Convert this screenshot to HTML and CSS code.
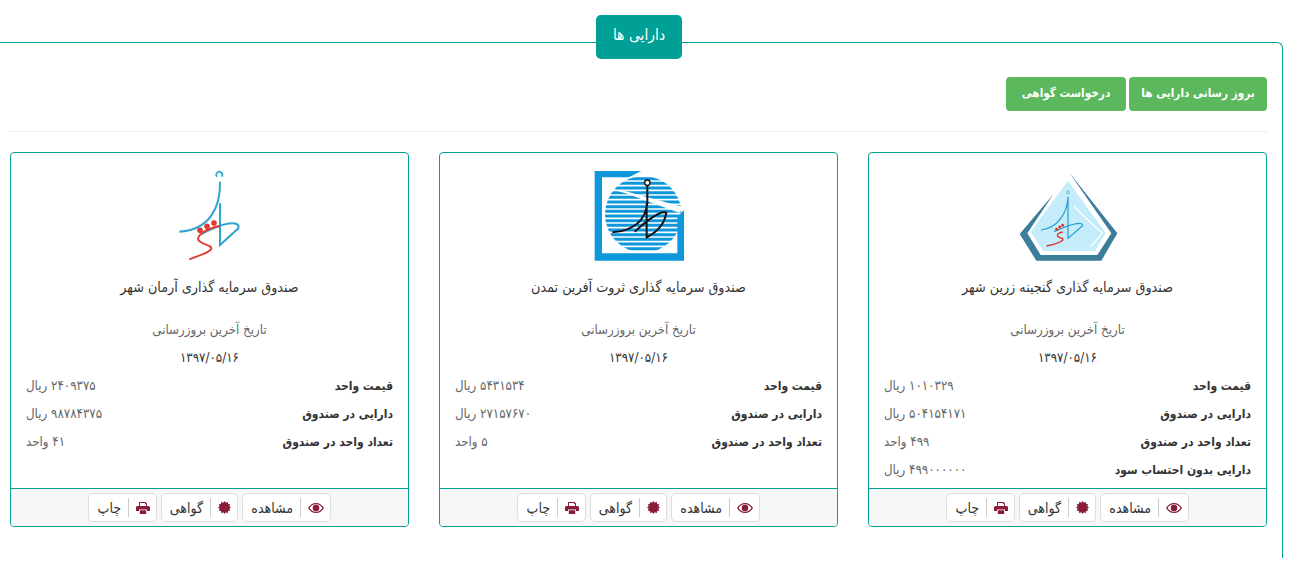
FILE: index.html
```html
<!DOCTYPE html>
<html lang="fa" dir="rtl">
<head>
    <meta charset="UTF-8">
    <title>دارایی ها</title>
    <link rel="stylesheet" href="styles.css">
</head>
<body>
    <div class="panel">
        <div class="panel-tab">دارایی ها</div>
        <div class="actions">
            <a class="btn-green btn-update">بروز رسانی دارایی ها</a>
            <a class="btn-green btn-request">درخواست گواهی</a>
        </div>
        <hr class="divider">
        <div class="cards">
            <div class="card">
                <div class="card-body">
                    <svg class="logo" viewBox="442 30 360 330">
                        <polygon points="625,67 770,250 722,332 527,332 477,252 578,133 500,250 540,315 710,315 752,250" fill="#3d7d9b"/>
                        <polygon points="622,92 735,248 703,303 548,303 510,245" fill="#c5ecfb"/>
                        <polyline points="640,170 725,250 690,290" fill="none" stroke="#fff" stroke-width="4"/>
                        <circle cx="622" cy="127" r="4" fill="none" stroke="#2fa5cf" stroke-width="2"/>
                        <path d="M622 140V265L665 228C668 212 630 222 580 245M622 140C620 190 590 235 541 240" fill="none" stroke="#1f9ccb" stroke-width="3.500"/>
                        <path d="M606 246C580 252 590 262 605 265C615 272 585 282 558 288" fill="none" stroke="#d8382e" stroke-width="4"/>
                        <circle cx="588" cy="238" r="4.500" fill="#d8382e"/>
                        <circle cx="597" cy="231" r="4.500" fill="#d8382e"/>
                        <circle cx="606" cy="226" r="4.500" fill="#d8382e"/>
                    </svg>
                    <h3 class="fund-name">صندوق سرمایه گذاری گنجینه زرین شهر</h3>
                    <div class="updated">تاریخ آخرین بروزرسانی</div>
                    <div class="updated-date">۱۳۹۷/۰۵/۱۶</div>
                    <div class="row"><span class="row-label">قیمت واحد</span><span class="row-value">۱۰۱۰۳۲۹ ریال</span></div>
                    <div class="row"><span class="row-label">دارایی در صندوق</span><span class="row-value">۵۰۴۱۵۴۱۷۱ ریال</span></div>
                    <div class="row"><span class="row-label">تعداد واحد در صندوق</span><span class="row-value">۴۹۹ واحد</span></div>
                    <div class="row"><span class="row-label">دارایی بدون احتساب سود</span><span class="row-value">۴۹۹۰۰۰۰۰۰ ریال</span></div>
                </div>
                <div class="card-footer">
                    <a class="btn-icon btn-view"><span class="btn-glyph"><svg class="eye" viewBox="0 0 16 10"><path d="M8 0C4.500 0 1.700 2 0 5c1.700 3 4.500 5 8 5s6.300-2 8-5c-1.700-3-4.500-5-8-5zm0 1.200c3 0 5 1.700 6.500 3.800C13 7.100 11 8.800 8 8.800S3 7.100 1.500 5C3 2.900 5 1.200 8 1.200z"/><circle cx="8" cy="5" r="3.300"/></svg></span>مشاهده</a>
                    <a class="btn-icon btn-cert"><span class="btn-glyph"><svg class="cert" viewBox="0 0 14 14"><polygon points="14,7 12.220,8.400 13.060,10.500 10.820,10.820 10.500,13.060 8.400,12.220 7,14 5.600,12.220 3.500,13.060 3.180,10.820 .94,10.500 1.780,8.400 0,7 1.780,5.600 .94,3.500 3.180,3.180 3.500,.94 5.600,1.780 7,0 8.400,1.780 10.500,.94 10.820,3.180 13.060,3.500 12.220,5.600"/></svg></span>گواهی</a>
                    <a class="btn-icon btn-print"><span class="btn-glyph"><svg class="print" viewBox="0 0 14 12"><path d="M3 0h6.500L11 1.500V4H3zM4 1v3h6V2H9V1zM0 5.500A1.500 1.500 0 0 1 1.500 4h11A1.500 1.500 0 0 1 14 5.500V9h-3V7.500H3V9H0zM3.800 8.300h6.400V12H3.800z"/></svg></span>چاپ</a>
                </div>
            </div>

            <div class="card">
                <div class="card-body">
                    <svg class="logo" viewBox="25 0 360 330">
                        <defs>
                            <clipPath id="disc"><circle cx="218" cy="163" r="115"/></clipPath>
                        </defs>
                        <polygon points="72,33 212,33 175,52 94,52 94,280 320,280 320,170 340,150 340,302 72,302" fill="#0f97dc"/>
                        <g clip-path="url(#disc)" stroke="#0f97dc" stroke-width="9">
                            <path d="M90 56H340M90 70H340M90 84H340M90 98H340M90 112H340M90 126H340M90 140H340M90 154H340M90 168H340M90 182H340M90 196H340M90 210H340M90 224H340M90 238H340M90 252H340M90 266H340"/>
                        </g>
                        <polygon points="120,88 160,92 345,143 325,158 165,100" fill="#fff"/>
                        <circle cx="230" cy="68" r="8" fill="#fff" stroke="#111" stroke-width="4"/>
                        <path d="M230 76V130C225 170 200 212 125 217M228 130V232C262 215 282 190 287 158C270 150 225 185 192 215" fill="none" stroke="#111" stroke-width="6"/>
                    </svg>
                    <h3 class="fund-name">صندوق سرمایه گذاری ثروت آفرین تمدن</h3>
                    <div class="updated">تاریخ آخرین بروزرسانی</div>
                    <div class="updated-date">۱۳۹۷/۰۵/۱۶</div>
                    <div class="row"><span class="row-label">قیمت واحد</span><span class="row-value">۵۴۳۱۵۳۴ ریال</span></div>
                    <div class="row"><span class="row-label">دارایی در صندوق</span><span class="row-value">۲۷۱۵۷۶۷۰ ریال</span></div>
                    <div class="row"><span class="row-label">تعداد واحد در صندوق</span><span class="row-value">۵ واحد</span></div>
                </div>
                <div class="card-footer">
                    <a class="btn-icon btn-view"><span class="btn-glyph"><svg class="eye" viewBox="0 0 16 10"><path d="M8 0C4.500 0 1.700 2 0 5c1.700 3 4.500 5 8 5s6.300-2 8-5c-1.700-3-4.500-5-8-5zm0 1.200c3 0 5 1.700 6.500 3.800C13 7.100 11 8.800 8 8.800S3 7.100 1.500 5C3 2.900 5 1.200 8 1.200z"/><circle cx="8" cy="5" r="3.300"/></svg></span>مشاهده</a>
                    <a class="btn-icon btn-cert"><span class="btn-glyph"><svg class="cert" viewBox="0 0 14 14"><polygon points="14,7 12.220,8.400 13.060,10.500 10.820,10.820 10.500,13.060 8.400,12.220 7,14 5.600,12.220 3.500,13.060 3.180,10.820 .94,10.500 1.780,8.400 0,7 1.780,5.600 .94,3.500 3.180,3.180 3.500,.94 5.600,1.780 7,0 8.400,1.780 10.500,.94 10.820,3.180 13.060,3.500 12.220,5.600"/></svg></span>گواهی</a>
                    <a class="btn-icon btn-print"><span class="btn-glyph"><svg class="print" viewBox="0 0 14 12"><path d="M3 0h6.500L11 1.500V4H3zM4 1v3h6V2H9V1zM0 5.500A1.500 1.500 0 0 1 1.500 4h11A1.500 1.500 0 0 1 14 5.500V9h-3V7.500H3V9H0zM3.800 8.300h6.400V12H3.800z"/></svg></span>چاپ</a>
                </div>
            </div>

            <div class="card">
                <div class="card-body">
                    <svg class="logo" viewBox="0 0 360 330">
                        <path d="M201 50A9 9 0 1 1 215 50" fill="none" stroke="#2fa5cf" stroke-width="5"/>
                        <path d="M210 65C212 140 180 210 88 215M210 130V255L265 205C272 180 220 185 150 225" fill="none" stroke="#2fa5cf" stroke-width="6"/>
                        <path d="M210 198C170 205 140 225 145 240C155 255 190 255 183 268C170 282 140 288 118 298" fill="none" stroke="#e03c31" stroke-width="6"/>
                        <circle cx="150" cy="211" r="8.500" fill="#e03c31"/>
                        <circle cx="171" cy="199" r="8.500" fill="#e03c31"/>
                        <circle cx="192" cy="189" r="8.500" fill="#e03c31"/>
                    </svg>
                    <h3 class="fund-name">صندوق سرمایه گذاری آرمان شهر</h3>
                    <div class="updated">تاریخ آخرین بروزرسانی</div>
                    <div class="updated-date">۱۳۹۷/۰۵/۱۶</div>
                    <div class="row"><span class="row-label">قیمت واحد</span><span class="row-value">۲۴۰۹۳۷۵ ریال</span></div>
                    <div class="row"><span class="row-label">دارایی در صندوق</span><span class="row-value">۹۸۷۸۴۳۷۵ ریال</span></div>
                    <div class="row"><span class="row-label">تعداد واحد در صندوق</span><span class="row-value">۴۱ واحد</span></div>
                </div>
                <div class="card-footer">
                    <a class="btn-icon btn-view"><span class="btn-glyph"><svg class="eye" viewBox="0 0 16 10"><path d="M8 0C4.500 0 1.700 2 0 5c1.700 3 4.500 5 8 5s6.300-2 8-5c-1.700-3-4.500-5-8-5zm0 1.200c3 0 5 1.700 6.500 3.800C13 7.100 11 8.800 8 8.800S3 7.100 1.500 5C3 2.900 5 1.200 8 1.200z"/><circle cx="8" cy="5" r="3.300"/></svg></span>مشاهده</a>
                    <a class="btn-icon btn-cert"><span class="btn-glyph"><svg class="cert" viewBox="0 0 14 14"><polygon points="14,7 12.220,8.400 13.060,10.500 10.820,10.820 10.500,13.060 8.400,12.220 7,14 5.600,12.220 3.500,13.060 3.180,10.820 .94,10.500 1.780,8.400 0,7 1.780,5.600 .94,3.500 3.180,3.180 3.500,.94 5.600,1.780 7,0 8.400,1.780 10.500,.94 10.820,3.180 13.060,3.500 12.220,5.600"/></svg></span>گواهی</a>
                    <a class="btn-icon btn-print"><span class="btn-glyph"><svg class="print" viewBox="0 0 14 12"><path d="M3 0h6.500L11 1.500V4H3zM4 1v3h6V2H9V1zM0 5.500A1.500 1.500 0 0 1 1.500 4h11A1.500 1.500 0 0 1 14 5.500V9h-3V7.500H3V9H0zM3.800 8.300h6.400V12H3.800z"/></svg></span>چاپ</a>
                </div>
            </div>
        </div>
    </div>
</body>
</html>
```

FILE: styles.css
```css
html, body {
    overflow: hidden;
}

body {
    margin: 0;
    height: 576px;
    background: #fff;
    color: #333;
    font-family: "DejaVu Sans Condensed", "DejaVu Sans", sans-serif;
    font-size: 13px;
}

.panel {
    position: relative;
    box-sizing: border-box;
    width: 1288px;
    height: 516px;
    margin: 42px 0 0 -5px;
    margin-right: 20px;
    padding: 34px 15px 0 15px;
    border: 1px solid #00a093;
    border-bottom: none;
    border-left: none;
    border-radius: 0 6px 0 0;
}

.panel-tab {
    position: absolute;
    top: -28px;
    left: 601px;
    width: 86px;
    height: 44px;
    border-radius: 5px;
    background: #00a096;
    color: #fff;
    font-size: 15.500px;
    line-height: 40px;
    text-align: center;
}

.actions {
    display: flex;
    gap: 3px;
    height: 34px;
}

.btn-green {
    display: block;
    border-radius: 4px;
    background: #5cb85c;
    color: #fff;
    font-size: 11.700px;
    font-weight: bold;
    line-height: 32px;
    text-align: center;
}

.btn-update {
    width: 138px;
}

.btn-request {
    width: 120px;
}

.divider {
    margin: 20px 0;
    border: none;
    border-top: 1px solid #eee;
}

.cards {
    display: grid;
    grid-template-columns: repeat(3, 399px);
    justify-content: space-between;
}

.card {
    box-sizing: border-box;
    display: flex;
    flex-direction: column;
    height: 375px;
    border: 1px solid #00a093;
    border-radius: 4px;
    overflow: hidden;
}

.card-body {
    flex: 1;
    padding: 7px 15px 0;
    text-align: center;
}

.logo {
    display: block;
    width: 120px;
    height: 110px;
    margin: 0 auto;
}

.fund-name {
    margin: 0;
    height: 39px;
    padding-top: 7px;
    font-size: 14.200px;
    font-weight: normal;
    line-height: 20px;
}

.updated {
    height: 28px;
    color: #666;
    font-size: 13.200px;
    line-height: 28px;
}

.updated-date {
    height: 28px;
    font-size: 13.200px;
    line-height: 28px;
}

.row {
    display: flex;
    justify-content: space-between;
    height: 28px;
    line-height: 28px;
}

.row-label {
    font-size: 12px;
    font-weight: bold;
}

.row-value {
    color: #666;
    font-size: 13.200px;
}

.card-footer {
    box-sizing: border-box;
    display: flex;
    justify-content: center;
    align-items: center;
    gap: 4px;
    height: 38px;
    border-top: 1px solid #00a093;
    background: #f7f7f7;
}

.btn-icon {
    display: flex;
    align-items: center;
    height: 29px;
    box-sizing: border-box;
    padding: 0 6px;
    border: 1px solid #ddd;
    border-radius: 5px;
    background: #fff;
    font-size: 14px;
}

.btn-view {
    width: 89px;
}

.btn-cert {
    width: 77px;
}

.btn-print {
    width: 69px;
}

.btn-glyph {
    display: flex;
    align-items: center;
    height: 19px;
    margin-left: 7px;
    padding-left: 7px;
    border-left: 1px solid #ccc;
}

.btn-glyph svg {
    display: block;
    fill: #8a1c3a;
}

.eye {
    width: 16px;
    height: 10px;
}

.cert {
    width: 13px;
    height: 13px;
}

.print {
    width: 14px;
    height: 12px;
}
```
